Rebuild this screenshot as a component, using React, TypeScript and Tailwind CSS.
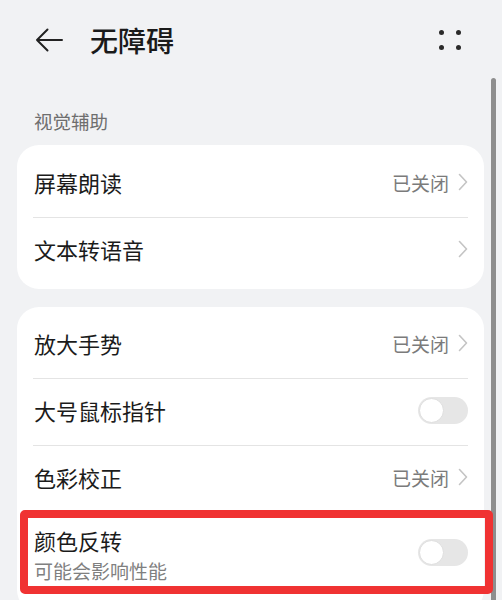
import React from 'react'

const font = { fontFamily: '"Noto Sans CJK SC", "Noto Sans", sans-serif' }

function Chevron() {
  return (
    <svg width="10" height="18" viewBox="0 0 10 18" className="ml-[9px]">
      <path d="M1.5 1.5 L8.5 9 L1.5 16.5" fill="none" stroke="#c4c4c4" strokeWidth="1.6" strokeLinecap="round" strokeLinejoin="round" />
    </svg>
  )
}

function Toggle() {
  return (
    <div className="w-[50px] h-[27px] rounded-full bg-[#e6e6e6] flex items-center p-[1px]">
      <div className="w-[25px] h-[25px] rounded-full bg-white border border-[#dedede]" />
    </div>
  )
}

function Row({ label, value, arrow, toggle }: { label: string; value?: string; arrow?: boolean; toggle?: boolean }) {
  return (
    <div className="h-[66px] flex items-center justify-between pl-[1px] pb-[4px]">
      <span className="text-[22px] leading-none text-[#1b1b1b]">{label}</span>
      <div className="flex items-center">
        {value && <span className="text-[19px] leading-none text-[#7b7b7b]">{value}</span>}
        {arrow && <Chevron />}
        {toggle && <Toggle />}
      </div>
    </div>
  )
}

const Divider = () => <div className="h-px bg-[#e4e4e4]" />

export default function App() {
  return (
    <div className="relative w-[502px] h-[600px] overflow-hidden bg-[#f1f2f4]" style={font}>
      {/* scrollbar */}
      <div className="absolute right-[6px] top-[78px] w-[5px] h-[540px] rounded-full bg-[#8e8e8e]" />

      <div className="h-[80px] flex items-center pl-[35px] pr-[41px]">
        <svg width="28" height="24" viewBox="0 0 28 24">
          <path d="M27 12 H2 M12.5 1.5 L2 12 L12.5 22.5" fill="none" stroke="#222" strokeWidth="2" strokeLinecap="round" strokeLinejoin="round" />
        </svg>
        <h1 className="ml-[27px] text-[28px] font-medium leading-none text-[#1a1a1a]">无障碍</h1>
        <div className="ml-auto grid grid-cols-2 gap-x-[12px] gap-y-[10px]">
          <span className="w-[5px] h-[5px] rounded-full bg-[#2a2a2a]" />
          <span className="w-[5px] h-[5px] rounded-full bg-[#2a2a2a]" />
          <span className="w-[5px] h-[5px] rounded-full bg-[#2a2a2a]" />
          <span className="w-[5px] h-[5px] rounded-full bg-[#2a2a2a]" />
        </div>
      </div>

      <div className="pl-[34px] pt-[29px] h-[65px] text-[18.5px] leading-[24px] text-[#6e6e6e]">视觉辅助</div>

      <div className="mx-[17px] w-[467px] bg-white rounded-[22px] px-[16px] pt-[6px] pb-[5px]">
        <Row label="屏幕朗读" value="已关闭" arrow />
        <Divider />
        <Row label="文本转语音" arrow />
      </div>

      <div className="mx-[17px] mt-[18px] w-[467px] bg-white rounded-[22px] px-[16px] pt-[5px] pb-[20px]">
        <Row label="放大手势" value="已关闭" arrow />
        <Divider />
        <Row label="大号鼠标指针" toggle />
        <Divider />
        <Row label="色彩校正" value="已关闭" arrow />
        <div className="relative h-[80px] flex items-center justify-between pl-[1px]">
          <div className="flex flex-col self-start pt-[17px]">
            <span className="text-[22px] leading-none text-[#1b1b1b]">颜色反转</span>
            <span className="text-[19px] leading-none text-[#808080] mt-[10px]">可能会影响性能</span>
          </div>
          <Toggle />
          <div className="absolute left-[-13px] right-[-25px] top-[-2px] h-[84px] border-[8px] border-[#f03232] rounded-[5px]" />
        </div>
      </div>
    </div>
  )
}
